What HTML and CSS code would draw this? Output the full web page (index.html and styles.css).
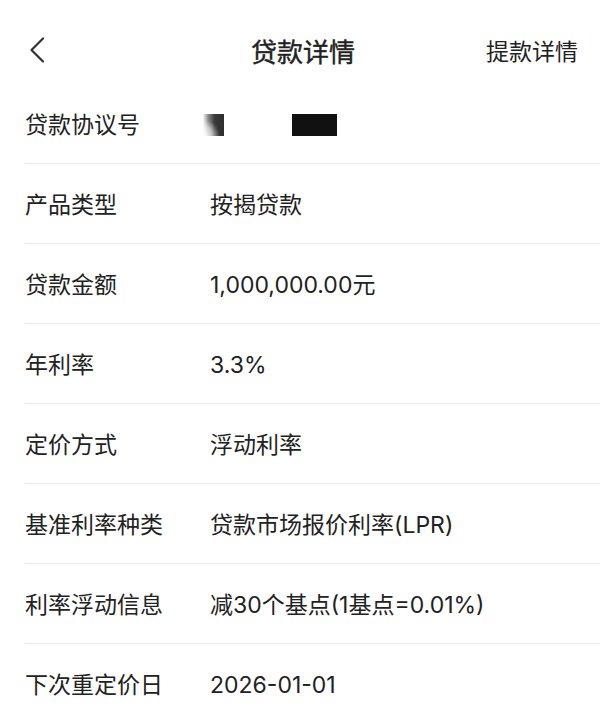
FILE: index.html
```html
<!DOCTYPE html>
<html lang="zh-CN">
<head>
<meta charset="utf-8">
<title>贷款详情</title>
<link rel="stylesheet" href="styles.css">
</head>
<body>
<div class="page">
  <header class="nav">
    <div class="nav-left">
      <svg class="back" width="18" height="28" viewBox="0 0 18 28">
        <path d="M15 2.5 L3.5 14 L15 25.5" fill="none" stroke="#333" stroke-width="2.2" stroke-linecap="round" stroke-linejoin="round"/>
      </svg>
    </div>
    <div class="nav-title">贷款详情</div>
    <div class="nav-right">提款详情</div>
  </header>
  <div class="list">
    <div class="row">
      <div class="label">贷款协议号</div>
      <div class="value redacted">
        <span class="mask mask-fade"></span>
        <span class="mask mask-solid"></span>
      </div>
    </div>
    <div class="row">
      <div class="label">产品类型</div>
      <div class="value">按揭贷款</div>
    </div>
    <div class="row">
      <div class="label">贷款金额</div>
      <div class="value">1,000,000.00元</div>
    </div>
    <div class="row">
      <div class="label">年利率</div>
      <div class="value">3.3%</div>
    </div>
    <div class="row">
      <div class="label">定价方式</div>
      <div class="value">浮动利率</div>
    </div>
    <div class="row">
      <div class="label">基准利率种类</div>
      <div class="value">贷款市场报价利率(LPR)</div>
    </div>
    <div class="row">
      <div class="label">利率浮动信息</div>
      <div class="value">减30个基点(1基点=0.01%)</div>
    </div>
    <div class="row">
      <div class="label">下次重定价日</div>
      <div class="value">2026-01-01</div>
    </div>
  </div>
</div>
</body>
</html>
```
FILE: styles.css
```css
html, body {
  margin: 0;
  padding: 0;
  background: #fff;
}
body {
  font-family: Inter, "Noto Sans CJK SC", "Noto Sans", sans-serif;
  color: #222;
}
.page {
  width: 600px;
  height: 720px;
  overflow: hidden;
}
.nav {
  height: 68px;
  padding-top: 16px;
  display: flex;
  align-items: center;
  justify-content: space-between;
}
.nav-left {
  width: 120px;
  padding-left: 28px;
  display: flex;
  align-items: center;
}
.back {
  display: block;
}
.nav-title {
  font-size: 26px;
  font-weight: 400;
  color: #222;
  -webkit-text-stroke: 0.4px #222;
}
.nav-right {
  width: 120px;
  text-align: right;
  padding-right: 22px;
  font-size: 23px;
  color: #222;
}
.list {
  margin-left: 25px;
}
.row {
  height: 76px;
  padding-top: 3px;
  border-bottom: 1px solid #e9e9e9;
  display: flex;
  align-items: center;
  font-size: 23px;
  line-height: 1;
}
.row:last-child {
  border-bottom: none;
}
.label {
  width: 185px;
  flex: none;
  color: #222;
}
.value {
  color: #222;
}
.redacted {
  display: flex;
  align-items: center;
  height: 22px;
}
.mask {
  display: block;
  height: 22px;
}
.mask-fade {
  width: 21px;
  margin-left: -7px;
  background:
    radial-gradient(circle at 0% 100%, rgba(255,255,255,0.95) 0, rgba(255,255,255,0.6) 30%, rgba(255,255,255,0) 55%),
    linear-gradient(to right, #fafafa 0%, #8a8a8a 25%, #3a3a3a 55%, #2e2e2e 100%);
}
.mask-solid {
  width: 45px;
  margin-left: 68px;
  background: #111;
}
```
